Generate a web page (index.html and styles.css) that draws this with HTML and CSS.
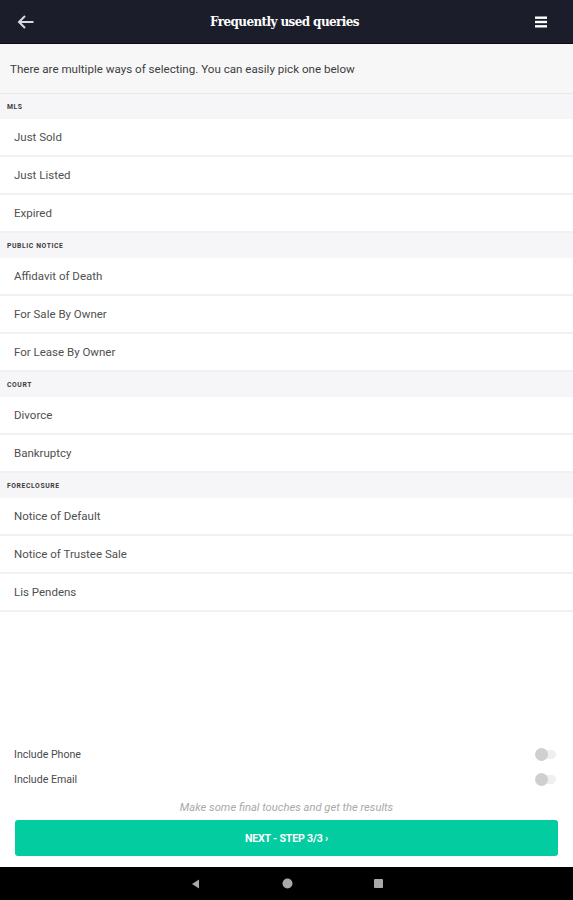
FILE: index.html
```html
<!DOCTYPE html>
<html lang="en">
<head>
  <meta charset="UTF-8">
  <title>Frequently used queries</title>
  <link rel="stylesheet" href="styles.css">
</head>
<body>
  <div class="screen">
    <!-- Top bar -->
    <div class="topbar">
      <svg class="back" width="17" height="16" viewBox="0 0 17 16">
        <path d="M16.5 8H2M8 2L2 8l6 6" fill="none" stroke="#d8d9dc" stroke-width="2"/>
      </svg>
      <h1>Frequently used queries</h1>
      <svg class="menu" width="12" height="12" viewBox="0 0 12 12">
        <rect x="0" y="0.5" width="12" height="2.4" fill="#fff"/>
        <rect x="0" y="4.8" width="12" height="2.4" fill="#fff"/>
        <rect x="0" y="9.1" width="12" height="2.4" fill="#fff"/>
      </svg>
    </div>

    <div class="intro">There are multiple ways of selecting. You can easily pick one below</div>

    <!-- Query list -->
    <div class="list">
      <div class="section">MLS</div>
      <div class="row">Just Sold</div>
      <div class="row">Just Listed</div>
      <div class="row">Expired</div>

      <div class="section">Public Notice</div>
      <div class="row">Affidavit of Death</div>
      <div class="row">For Sale By Owner</div>
      <div class="row">For Lease By Owner</div>

      <div class="section">Court</div>
      <div class="row">Divorce</div>
      <div class="row">Bankruptcy</div>

      <div class="section">Foreclosure</div>
      <div class="row">Notice of Default</div>
      <div class="row">Notice of Trustee Sale</div>
      <div class="row">Lis Pendens</div>
    </div>

    <!-- Options and next button -->
    <div class="footer">
      <div class="option">
        <span>Include Phone</span>
        <span class="toggle"></span>
      </div>
      <div class="option">
        <span>Include Email</span>
        <span class="toggle"></span>
      </div>
      <p class="hint">Make some final touches and get the results</p>
      <button class="next">NEXT - STEP 3/3 &rsaquo;</button>
    </div>

    <!-- Android nav bar -->
    <div class="navbar">
      <svg width="10" height="10" viewBox="0 0 10 10"><path d="M8 0.5V9.5L1 5z" fill="#a9a9a9"/></svg>
      <svg width="11" height="11" viewBox="0 0 11 11"><circle cx="5.5" cy="5.5" r="5" fill="#a9a9a9"/></svg>
      <svg width="9" height="9" viewBox="0 0 9 9"><rect width="9" height="9" rx="1" fill="#a9a9a9"/></svg>
    </div>
  </div>
</body>
</html>
```

FILE: styles.css
```css
body {
  margin: 0;
  font-family: Roboto, "Liberation Sans", sans-serif;
  background: #fff;
}
.screen {
  display: flex;
  flex-direction: column;
  height: 900px;
}
.topbar {
  height: 43px;
  background-color: #1b1e2a;
  border-bottom: 1px solid #0c0d12;
  display: flex;
  align-items: center;
  padding: 0 26px 0 17px;
}
.topbar h1 {
  flex: 1;
  margin: 0;
  text-align: center;
  color: #fff;
  font-family: "DejaVu Serif", "Liberation Serif", serif;
  font-weight: bold;
  font-size: 12px;
  letter-spacing: -0.6px;
}
.intro {
  height: 49px;
  background-color: #f7f7f8;
  border-bottom: 1px solid #e8e8ea;
  display: flex;
  align-items: center;
  padding-left: 10px;
  font-size: 11.6px;
  color: #3d3d3d;
}
.list {
  flex: 1;
}
.section {
  height: 25px;
  background-color: #f6f6f8;
  display: flex;
  align-items: center;
  padding-left: 7px;
  font-size: 6.8px;
  font-weight: bold;
  text-transform: uppercase;
  color: #3a3a3a;
  letter-spacing: 0.6px;
}
.row {
  height: 36px;
  border-bottom: 2px solid #f1f1f4;
  display: flex;
  align-items: center;
  padding-left: 14px;
  font-size: 11.5px;
  color: #505050;
}
.footer {
  padding: 0 15px 11px;
}
.option {
  height: 25px;
  margin-left: -1px;
  display: flex;
  align-items: center;
  justify-content: space-between;
  font-size: 10.6px;
  color: #4a4a4a;
}
.toggle {
  position: relative;
  width: 20px;
  height: 9px;
  margin-right: 2px;
  border-radius: 5px;
  background-color: #efeff0;
}
.toggle::before {
  content: "";
  position: absolute;
  left: -1px;
  top: -2px;
  width: 13px;
  height: 13px;
  border-radius: 50%;
  background-color: #cfcfd0;
}
.hint {
  margin: 10px 0 6px;
  line-height: 12px;
  text-align: center;
  font-size: 11.2px;
  font-style: italic;
  color: #a9a9a9;
}
.next {
  display: block;
  width: 100%;
  height: 36px;
  border: none;
  border-radius: 3px;
  background-color: #03cca0;
  color: #fff;
  font-family: Roboto, "Liberation Sans", sans-serif;
  font-size: 10.6px;
  font-weight: bold;
  letter-spacing: -0.2px;
}
.navbar {
  height: 33px;
  background-color: #000;
  display: flex;
  align-items: center;
  justify-content: center;
  gap: 81px;
}
```
